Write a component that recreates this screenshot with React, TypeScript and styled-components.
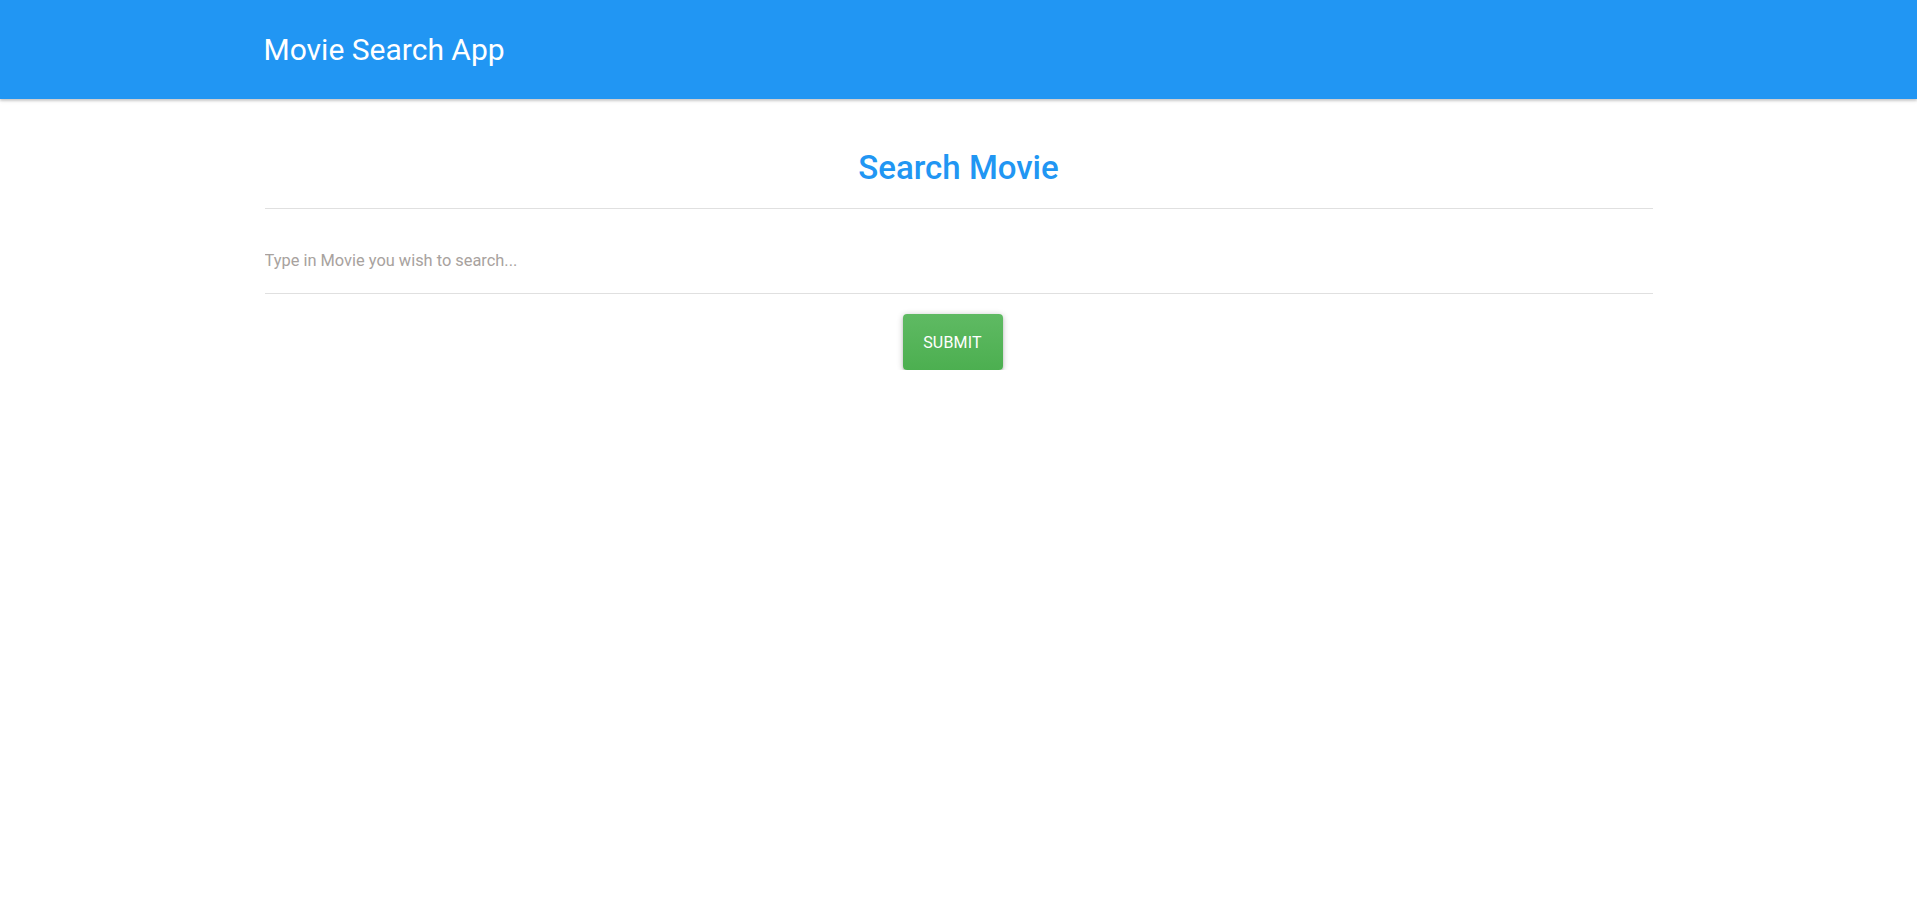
import { FC, useState } from "react";
import styled, { createGlobalStyle } from "styled-components";

const GlobalStyle = createGlobalStyle`
  html, body {
    margin: 0;
    padding: 0;
    background: #fff;
    font-family: Roboto, "Liberation Sans", sans-serif;
  }
`;

const NavBar = styled.nav`
  height: 99px;
  background: #2196f3;
  box-shadow: 0 2px 2px 0 rgba(0, 0, 0, 0.14), 0 1px 5px 0 rgba(0, 0, 0, 0.12);
  display: flex;
  justify-content: center;
`;

const Container = styled.div`
  width: 1388px;
  display: flex;
  flex-direction: column;
`;

const NavInner = styled(Container)`
  flex-direction: row;
  align-items: center;
`;

const Brand = styled.a`
  color: #fff;
  font-size: 30px;
  font-weight: 400;
  line-height: 1;
  text-decoration: none;
  margin-left: -1px;
`;

const Main = styled.main`
  display: flex;
  justify-content: center;
`;

const Heading = styled.h1`
  margin: 0;
  padding-top: 49px;
  padding-bottom: 20px;
  text-align: center;
  color: #2196f3;
  font-size: 33px;
  font-weight: 500;
  line-height: 40px;
  border-bottom: 1px solid #e0e0e0;
`;

const Form = styled.form`
  display: flex;
  flex-direction: column;
  align-items: center;
`;

const SearchInput = styled.input`
  width: 100%;
  box-sizing: border-box;
  margin-top: 24px;
  height: 61px;
  padding: 0 0 5px;
  border: none;
  border-bottom: 1px solid #e0e0e0;
  outline: none;
  font-family: inherit;
  font-size: 16.4px;
  color: #212121;
  background: transparent;

  &::placeholder {
    color: #a8a29e;
  }
`;

const SubmitButton = styled.button`
  margin-top: 20px;
  margin-right: 12px;
  width: 100px;
  height: 56px;
  border: none;
  border-radius: 4px;
  background: linear-gradient(180deg, #5fba63 0%, #4caf50 100%);
  color: #fff;
  font-family: inherit;
  font-size: 16px;
  letter-spacing: 0.2px;
  text-transform: uppercase;
  cursor: pointer;
  box-shadow: 0 2px 2px 0 rgba(0, 0, 0, 0.16), 0 3px 1px -2px rgba(0, 0, 0, 0.14),
    0 1px 6px 0 rgba(0, 0, 0, 0.24);
`;

const App: FC = () => {
  const [query, setQuery] = useState("");
  return (
    <>
      <GlobalStyle />
      <NavBar>
        <NavInner>
          <Brand href="#">Movie Search App</Brand>
        </NavInner>
      </NavBar>
      <Main>
        <Container>
          <Heading>Search Movie</Heading>
          <Form onSubmit={(e) => e.preventDefault()}>
            <SearchInput
              type="text"
              value={query}
              onChange={(e) => setQuery(e.target.value)}
              placeholder="Type in Movie you wish to search..."
            />
            <SubmitButton type="submit">Submit</SubmitButton>
          </Form>
        </Container>
      </Main>
    </>
  );
};

export default App;
